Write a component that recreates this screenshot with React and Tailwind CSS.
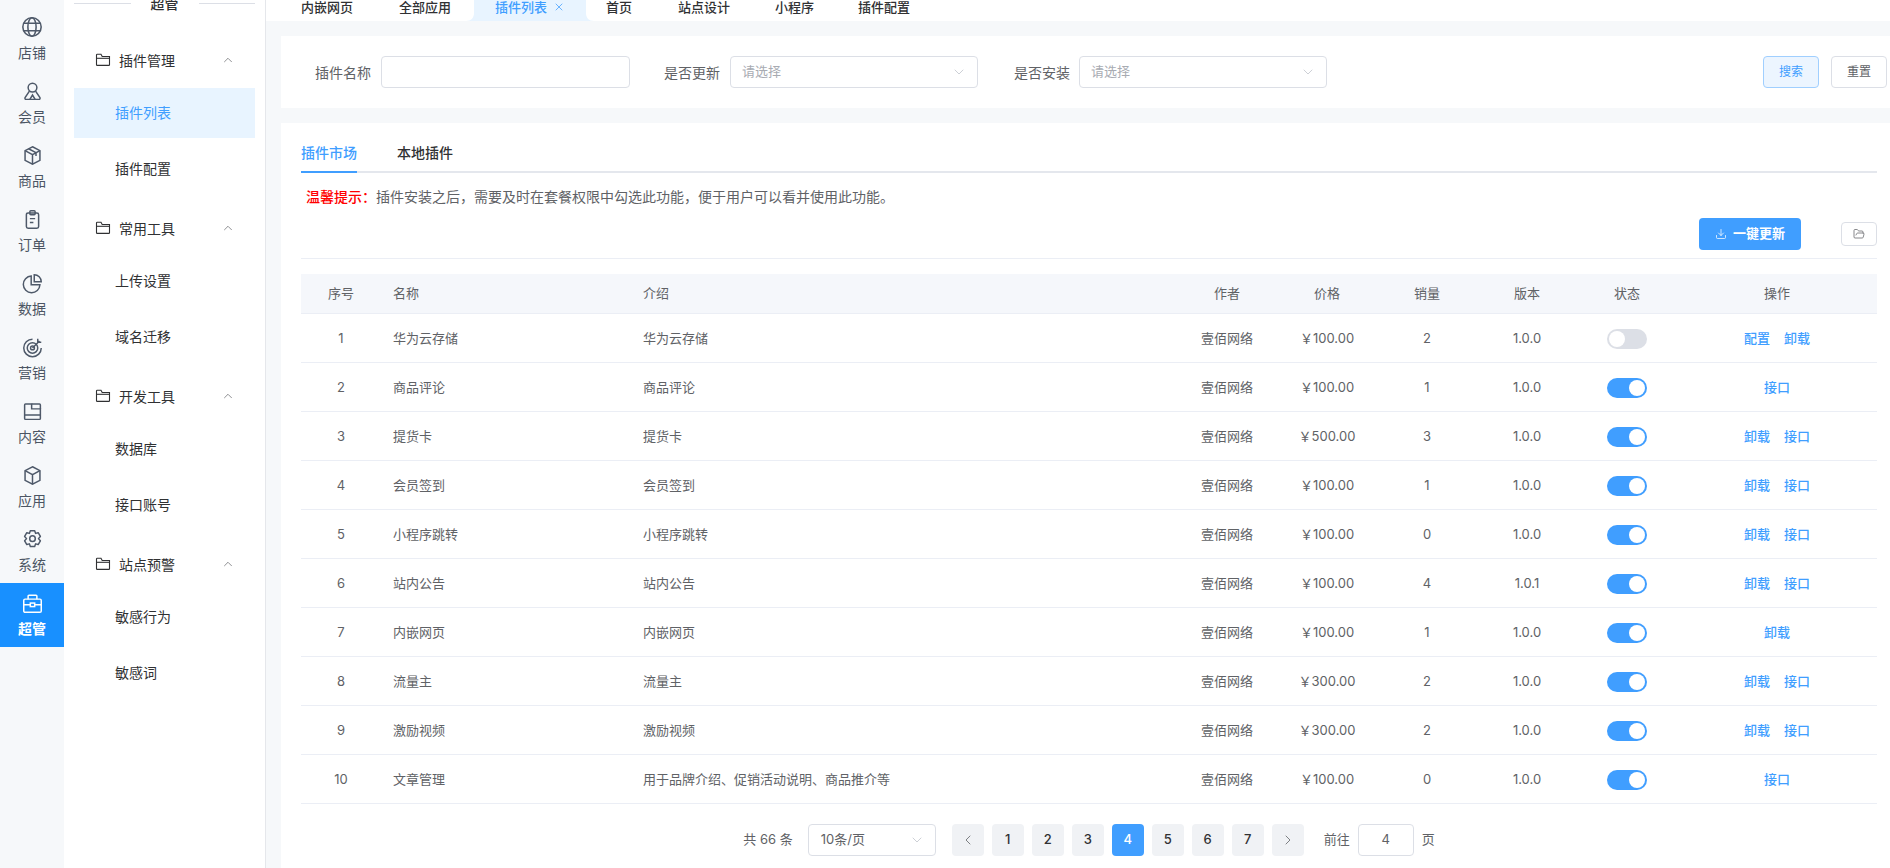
import React from 'react';
import { ChevronUp, ChevronDown, ChevronLeft, ChevronRight, X, Download, FolderOpen } from 'lucide-react';

function RailIcon({ name, className }) {
    const paths = {
        globe: <><circle cx="12" cy="12" r="10" /><ellipse cx="12" cy="12" rx="4.5" ry="10" /><path d="M3.2 8h17.6M3.2 16h17.600" /></>,
        user: <><circle cx="12" cy="7.500" r="5" /><path d="M8.500 11.500 3.500 19c-.5 1.200.2 2 1 2h15c.8 0 1.500-.8 1-2l-5-7.500" /><path d="M9 21l3-5 3 5" /></>,
        box: <><path d="M12 2 20.500 6.500v11L12 22l-8.500-4.500v-11z" /><path d="M3.500 6.500 12 11l8.500-4.500M12 11v11M7.500 4.300 16 8.800v3.700" /></>,
        order: <><rect x="5" y="4.500" width="14" height="17.500" rx="2" /><rect x="9" y="2" width="6" height="4.500" rx="1" /><path d="M9 11h6M9 15.500h4" /></>,
        pie: <><path d="M10.500 3.500a9.500 9.500 0 1 0 10 10h-10z" /><path d="M14 2a8 8 0 0 1 8 8h-8z" /></>,
        target: <><path d="M12 2.500a10 10 0 1 0 10 10" /><circle cx="12" cy="12.500" r="6" /><circle cx="12" cy="12.500" r="2.200" /><path d="M12 12.500 20 4.500M18 2v4h4" /></>,
        folder: <><path d="M3 4.500c0-.6.400-1 1-1h7v5.500h10v11c0 .6-.4 1-1 1H4c-.6 0-1-.4-1-1z" /><path d="M11 3.500h9c.6 0 1 .4 1 1V9M3 16h18" /></>,
        cube: <><path d="M12 2 20.500 6.500v11L12 22l-8.500-4.500v-11z" /><path d="M3.500 6.500 12 11l8.500-4.500M12 11v11" /></>,
        gear: <><path d="M9.500 2h5l1 3 3-.8L21 8.500 18.800 11l2.200 2.500-2.500 4.300-3-.8-1 3h-5l-1-3-3 .8L3 13.500 5.200 11 3 8.500l2.500-4.300 3 .8z" strokeLinejoin="round" /><circle cx="12" cy="11" r="3.200" /></>,
        case: <><rect x="2" y="7" width="20" height="15" rx="1.500" /><path d="M7 7V3.500c0-.6.400-1 1-1h8c.6 0 1 .4 1 1V7M2 13.500h7.500M14.500 13.500H22" /><rect x="9.500" y="11.500" width="5" height="4" /></>,
    };
    return (
        <svg viewBox="0 0 24 24" fill="none" stroke="currentColor" strokeWidth="1.700" className={className}>
            {paths[name]}
        </svg>
    );
}

function FolderIcon() {
    return (
        <svg viewBox="0 0 16 16" fill="none" stroke="#303133" strokeWidth="1.100" className="w-4 h-4 mr-[8px]">
            <path d="M1.500 3c0-.4.300-.7.700-.7h3.800l1.200 2.200h7.300v8.200c0 .4-.3.7-.7.7H2.200c-.4 0-.7-.3-.7-.7z" />
            <path d="M1.500 6.300h13" />
        </svg>
    );
}

const railItems = [
    ['globe', '店铺'], ['user', '会员'], ['box', '商品'], ['order', '订单'], ['pie', '数据'],
    ['target', '营销'], ['folder', '内容'], ['cube', '应用'], ['gear', '系统'], ['case', '超管'],
];

const menuGroups = [
    { title: '插件管理', items: ['插件列表', '插件配置'] },
    { title: '常用工具', items: ['上传设置', '域名迁移'] },
    { title: '开发工具', items: ['数据库', '接口账号'] },
    { title: '站点预警', items: ['敏感行为', '敏感词'] },
];

const rows = [
    [1, '华为云存储', '华为云存储', '100.00', 2, '1.0.0', false, ['配置', '卸载']],
    [2, '商品评论', '商品评论', '100.00', 1, '1.0.0', true, ['接口']],
    [3, '提货卡', '提货卡', '500.00', 3, '1.0.0', true, ['卸载', '接口']],
    [4, '会员签到', '会员签到', '100.00', 1, '1.0.0', true, ['卸载', '接口']],
    [5, '小程序跳转', '小程序跳转', '100.00', 0, '1.0.0', true, ['卸载', '接口']],
    [6, '站内公告', '站内公告', '100.00', 4, '1.0.1', true, ['卸载', '接口']],
    [7, '内嵌网页', '内嵌网页', '100.00', 1, '1.0.0', true, ['卸载']],
    [8, '流量主', '流量主', '300.00', 2, '1.0.0', true, ['卸载', '接口']],
    [9, '激励视频', '激励视频', '300.00', 2, '1.0.0', true, ['卸载', '接口']],
    [10, '文章管理', '用于品牌介绍、促销活动说明、商品推介等', '100.00', 0, '1.0.0', true, ['接口']],
];

const gridCols = 'grid grid-cols-[80px_250px_546px_100px_100px_100px_100px_100px_200px] items-center';

function Rail() {
    return (
        <div className="w-16 shrink-0 bg-[#f6f8fa] pt-[7px]">
            {railItems.map(([icon, label]) => {
                const active = label === '超管';
                return (
                    <div key={label} className={'h-16 flex flex-col items-center pt-[8px] ' + (active ? 'bg-[#1890ff] text-white font-bold' : 'text-[#4e5969]')}>
                        <div className="h-6 flex items-center">
                            <RailIcon name={icon} className={icon === 'globe' ? 'w-[22px] h-[22px]' : 'w-[21px] h-[21px]'} />
                        </div>
                        <span className={'text-[14px] leading-5 mt-[4px] ' + (active ? 'text-white' : 'text-[#4b5563]')}>{label}</span>
                    </div>
                );
            })}
        </div>
    );
}

function SideMenu() {
    return (
        <div className="w-[202px] shrink-0 bg-white border-r border-[#e5e7eb] px-[10px]">
            <div className="flex items-center h-[20px] -mt-[7px] mb-[22px]">
                <div className="flex-1 h-px bg-[#dcdfe6]"></div>
                <span className="w-[68px] text-center text-[14px] font-medium text-[#303133]">超管</span>
                <div className="flex-1 h-px bg-[#dcdfe6]"></div>
            </div>
            {menuGroups.map(group => (
                <div key={group.title} className="mb-[9px]">
                    <div className="h-[50px] flex items-center pl-[21px] pr-[20px] mb-[3px] text-[14px] text-[#303133]">
                        <FolderIcon />
                        <span className="flex-1">{group.title}</span>
                        <ChevronUp className="w-[14px] h-[14px] text-[#606266]" strokeWidth={1.2} />
                    </div>
                    <div className="flex flex-col gap-[6px]">
                        {group.items.map(item => {
                            const active = item === '插件列表';
                            return (
                                <div key={item} className={'h-[50px] flex items-center pl-[41px] pb-[2px] text-[14px] ' + (active ? 'bg-[#e8f4ff] text-[#409eff]' : 'text-[#303133]')}>
                                    {item}
                                </div>
                            );
                        })}
                    </div>
                </div>
            ))}
        </div>
    );
}

function Flare({ side }) {
    return (
        <svg viewBox="0 0 8 8" className={'absolute bottom-0 w-2 h-2 ' + (side === 'left' ? '-left-2' : '-right-2')}>
            <path d={side === 'left' ? 'M8 0C8 5 5 8 0 8h8z' : 'M0 0c0 5 3 8 8 8H0z'} fill="#e8f4ff" />
        </svg>
    );
}

function TopTabs() {
    return (
        <div className="h-[21px] shrink-0 bg-white flex items-start text-[13px] font-medium text-[#303133] leading-[15px] pl-[12px] overflow-hidden">
            <span className="px-[23px]">内嵌网页</span>
            <span className="px-[23px]">全部应用</span>
            <div className="relative h-[21px] w-[112px] bg-[#e8f4ff] text-[#409eff] flex items-start pl-[21px]">
                <Flare side="left" />
                插件列表
                <X className="w-3 h-3 ml-[6px] mt-[1px]" strokeWidth={1.5} />
                <Flare side="right" />
            </div>
            <span className="pl-[20px] pr-[23px]">首页</span>
            <span className="px-[23px]">站点设计</span>
            <span className="pl-[22px] pr-[22px]">小程序</span>
            <span className="pl-[22px] pr-[23px]">插件配置</span>
        </div>
    );
}

function SelectBox({ placeholder }) {
    return (
        <div className="w-[248px] h-8 rounded border border-[#dcdfe6] bg-white flex items-center justify-between pl-[11px] pr-[10px] text-[13px] text-[#a8abb2]">
            <span>{placeholder}</span>
            <ChevronDown className="w-4 h-4 text-[#c0c4cc]" strokeWidth={1.2} />
        </div>
    );
}

function FilterCard() {
    return (
        <div className="h-[72px] bg-white flex items-center pl-[34px] pr-[3px] text-[14px] text-[#606266]">
            <span className="mr-[10px]">插件名称</span>
            <div className="w-[249px] h-8 rounded border border-[#dcdfe6]"></div>
            <span className="ml-[34px] mr-[10px]">是否更新</span>
            <SelectBox placeholder="请选择" />
            <span className="ml-[36px] mr-[9px]">是否安装</span>
            <SelectBox placeholder="请选择" />
            <div className="ml-auto flex gap-3">
                <button className="w-14 h-8 rounded border border-[#a0cfff] bg-[#ecf5ff] text-[#409eff] text-[12px]">搜索</button>
                <button className="w-14 h-8 rounded border border-[#dcdfe6] bg-white text-[#606266] text-[12px]">重置</button>
            </div>
        </div>
    );
}

function Switch({ on }) {
    return (
        <div className={'w-10 h-5 rounded-full flex items-center px-[2px] ' + (on ? 'bg-[#409eff] justify-end' : 'bg-[#dcdfe6] justify-start')}>
            <div className="w-4 h-4 rounded-full bg-white"></div>
        </div>
    );
}

function PluginTable() {
    return (
        <div className="text-[13px] text-[#606266]">
            <div className={gridCols + ' h-[40px] bg-[#f5f7fb] border-b border-[#ebeef5] text-center'}>
                <span>序号</span>
                <span className="text-left pl-3">名称</span>
                <span className="text-left pl-3">介绍</span>
                <span>作者</span>
                <span>价格</span>
                <span>销量</span>
                <span>版本</span>
                <span>状态</span>
                <span>操作</span>
            </div>
            {rows.map(([no, name, intro, price, sales, version, on, actions]) => (
                <div key={no} className={gridCols + ' h-[49px] pt-[1px] border-b border-[#ebeef5] text-center'}>
                    <span>{no}</span>
                    <span className="text-left pl-3">{name}</span>
                    <span className="text-left pl-3">{intro}</span>
                    <span>壹佰网络</span>
                    <span>￥{price}</span>
                    <span>{sales}</span>
                    <span>{version}</span>
                    <div className="flex justify-center"><Switch on={on} /></div>
                    <div className="flex justify-center gap-[14px] text-[#409eff] font-medium">
                        {actions.map(a => <span key={a}>{a}</span>)}
                    </div>
                </div>
            ))}
        </div>
    );
}

function Pagination() {
    const pageBtn = 'w-8 h-8 rounded-sm flex items-center justify-center text-[13px] font-medium ';
    return (
        <div className="flex items-center justify-center mt-5 text-[13px] text-[#606266]">
            <span>共 66 条</span>
            <div className="ml-[15px] w-[128px] h-8 rounded border border-[#dcdfe6] flex items-center justify-between pl-3 pr-[10px]">
                <span>10条/页</span>
                <ChevronDown className="w-4 h-4 text-[#c0c4cc]" strokeWidth={1.2} />
            </div>
            <div className="ml-4 flex gap-2">
                <div className={pageBtn + 'bg-[#f0f2f5]'}><ChevronLeft className="w-4 h-4 text-[#606266]" strokeWidth={1.2} /></div>
                {[1, 2, 3, 4, 5, 6, 7].map(n => (
                    <div key={n} className={pageBtn + (n === 4 ? 'bg-[#409eff] text-white' : 'bg-[#f0f2f5] text-[#303133]')}>{n}</div>
                ))}
                <div className={pageBtn + 'bg-[#f0f2f5]'}><ChevronRight className="w-4 h-4 text-[#606266]" strokeWidth={1.2} /></div>
            </div>
            <span className="ml-[20px]">前往</span>
            <div className="ml-2 w-14 h-8 rounded border border-[#dcdfe6] flex items-center justify-center">4</div>
            <span className="ml-2">页</span>
        </div>
    );
}

function MarketCard() {
    return (
        <div className="flex-1 bg-white mt-[15px] pl-[20px] pr-[13px]">
            <div className="h-[50px] flex items-end border-b-2 border-[#e4e7ed] text-[14px] font-medium">
                <span className="relative h-full flex items-center pt-[11px] text-[#409eff]">
                    插件市场
                    <span className="absolute left-0 right-0 -bottom-[2px] h-[2px] bg-[#409eff]"></span>
                </span>
                <span className="h-full flex items-center pt-[11px] ml-10 text-[#303133]">本地插件</span>
            </div>
            <p className="mt-[15px] pl-[5px] text-[14px] leading-[18px] text-[#606266]">
                <span className="text-[#ff0000] font-medium">温馨提示：</span>
                插件安装之后，需要及时在套餐权限中勾选此功能，便于用户可以看并使用此功能。
            </p>
            <div className="h-[53px] flex items-start justify-end border-b border-[#ebeef5] pt-[12px]">
                <button className="w-[102px] h-8 rounded bg-[#409eff] text-white text-[13px] font-bold flex items-center justify-center">
                    <Download className="w-3 h-3 mr-[6px]" strokeWidth={1.5} />
                    一键更新
                </button>
                <button className="ml-10 mt-1 w-9 h-6 rounded border border-[#dcdfe6] flex items-center justify-center">
                    <FolderOpen className="w-3 h-3 text-[#606266]" strokeWidth={1.5} />
                </button>
            </div>
            <div className="mt-[15px]">
                <PluginTable />
            </div>
            <Pagination />
        </div>
    );
}

export default function App() {
    return (
        <div className="h-screen w-full flex overflow-hidden font-['Inter','Noto_Sans_CJK_SC',sans-serif]">
            <Rail />
            <SideMenu />
            <div className="flex-1 min-w-0 flex flex-col bg-[#f6f8fa]">
                <TopTabs />
                <div className="flex-1 flex flex-col pl-[15px] pt-[15px]">
                    <FilterCard />
                    <MarketCard />
                </div>
            </div>
        </div>
    );
}
